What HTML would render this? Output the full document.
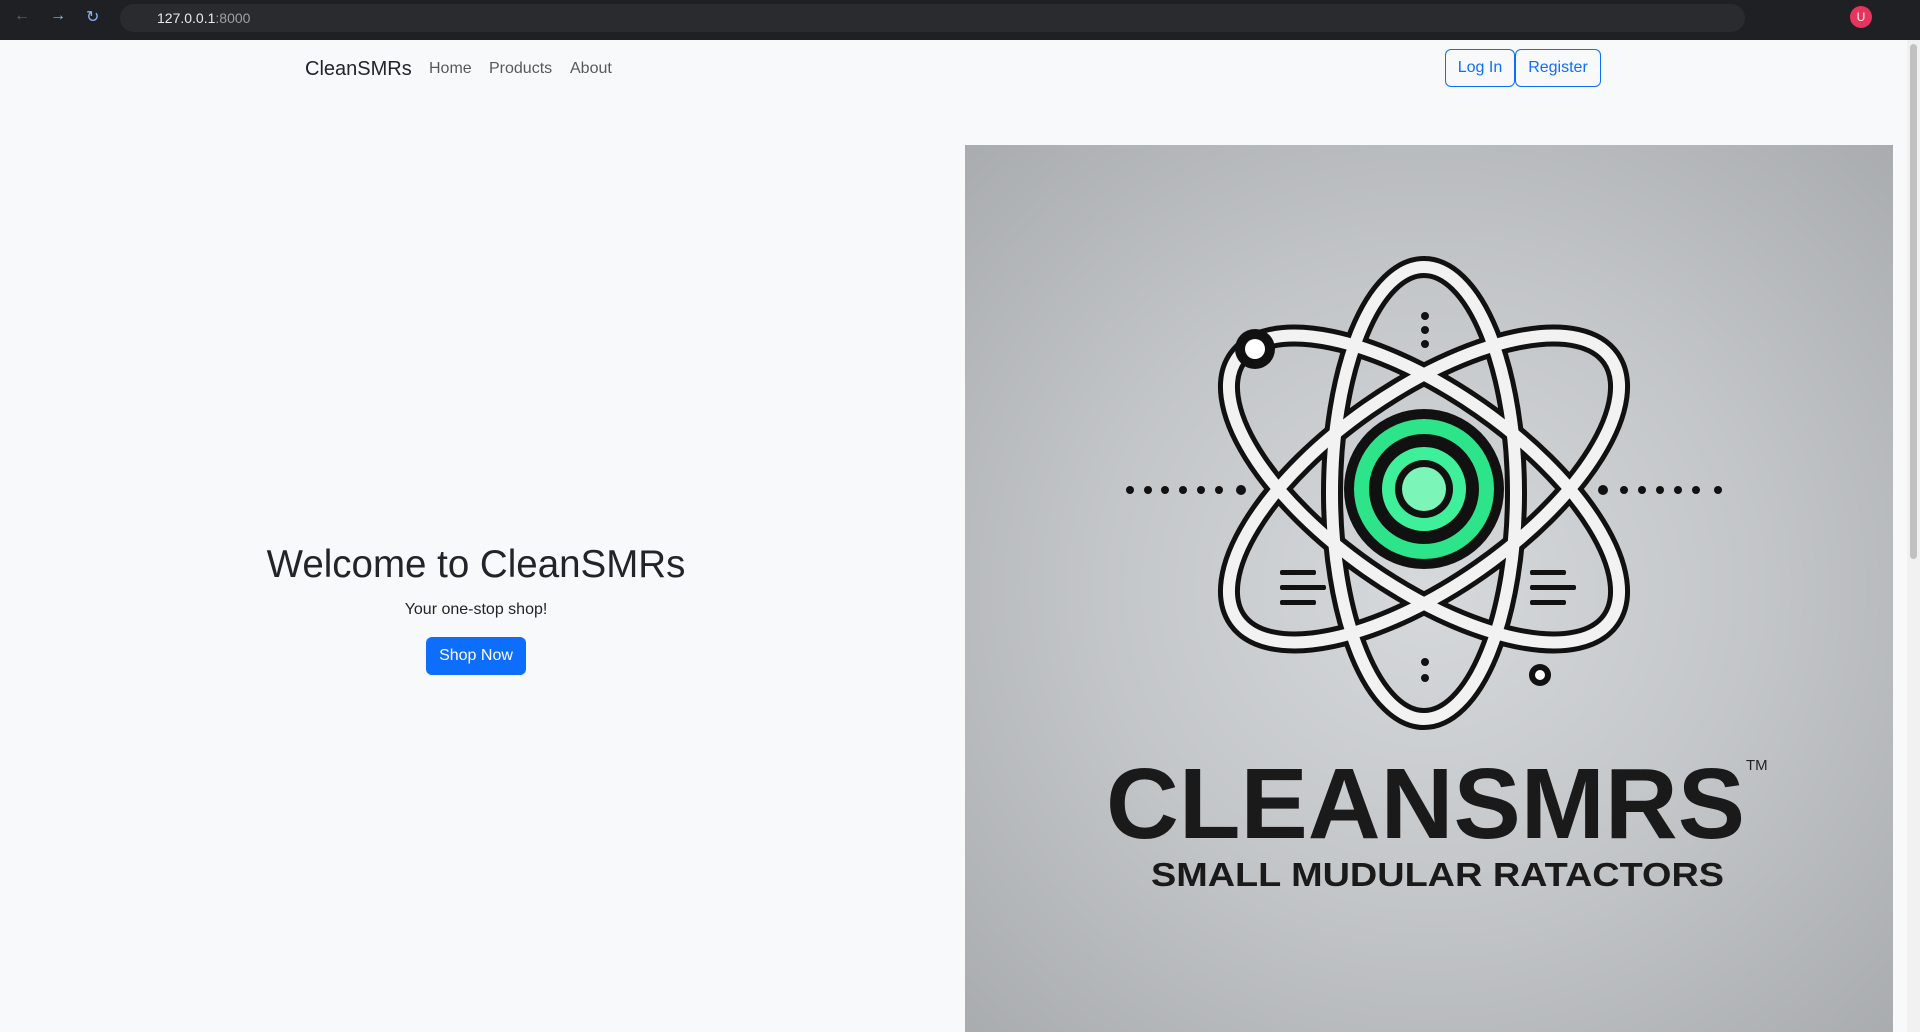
<!DOCTYPE html>
<html><head><meta charset="utf-8"><style>
*{margin:0;padding:0;box-sizing:border-box}
html,body{width:1920px;height:1032px;overflow:hidden;background:#f8f9fa;font-family:"Liberation Sans",sans-serif;position:relative}
.chrome{position:absolute;left:0;top:0;width:1920px;height:40px;background:#1f2023}
.url{position:absolute;left:120px;top:4px;width:1625px;height:28px;border-radius:14px;background:#2a2b2f;color:#e8eaed;font-size:14px;line-height:28px;padding-left:37px}
.url span{color:#9aa0a6}
.ab{position:absolute;color:#8ab4f8;font-size:16px;top:7px}
.brand{position:absolute;left:305px;top:58px;font-size:20px;color:#212529}
.lnk{position:absolute;top:60px;font-size:16px;color:rgba(0,0,0,.65)}
.btno{position:absolute;top:49px;height:38px;border:1px solid #0d6efd;color:#0d6efd;border-radius:6px;font-size:16px;line-height:36px;text-align:center}
h1{position:absolute;left:0;width:952px;text-align:center;top:543px;font-size:38.5px;font-weight:500;color:#212529}
.sub{position:absolute;left:0;width:952px;text-align:center;top:601px;font-size:16px;color:#212529}
.shop{position:absolute;left:426px;top:637px;width:100px;height:38px;background:#0d6efd;color:#fff;border-radius:6px;font-size:16px;line-height:38px;text-align:center}
.img{position:absolute;left:965px;top:145px;width:928px;height:887px;background:radial-gradient(ellipse at 50% 50%,#d6d9dc 0%,#c3c6c9 50%,#a9acaf 100%)}
.sb{position:absolute;left:1907px;top:40px;width:13px;height:992px;background:#f1f1f1}
.sb div{position:absolute;left:3px;top:4px;width:7px;height:515px;border-radius:4px;background:#c1c1c1}
</style></head><body>
<div class="chrome">
<div class="ab" style="left:14px;color:#5f6368">←</div>
<div class="ab" style="left:50px">→</div>
<div class="ab" style="left:86px">↻</div>
<div class="url">127.0.0.1<span>:8000</span></div>
<div style="position:absolute;left:1850px;top:6px;width:22px;height:22px;border-radius:50%;background:#e8345d;color:#fff;font-size:12px;text-align:center;line-height:22px">U</div>
</div>
<div class="brand">CleanSMRs</div>
<div class="lnk" style="left:429px">Home</div>
<div class="lnk" style="left:489px">Products</div>
<div class="lnk" style="left:570px">About</div>
<div class="btno" style="left:1445px;width:70px">Log In</div>
<div class="btno" style="left:1515px;width:86px">Register</div>
<h1>Welcome to CleanSMRs</h1>
<div class="sub">Your one-stop shop!</div>
<div class="shop">Shop Now</div>
<div class="img">
<svg width="928" height="887" viewBox="965 145 928 887" style="position:absolute;left:0;top:0">
<g fill="none">
<g stroke="#111" stroke-width="22">
<ellipse cx="1424" cy="493" rx="92" ry="226"/>
<ellipse cx="1424" cy="489" rx="228" ry="98" transform="rotate(35 1424 489)"/>
<ellipse cx="1424" cy="489" rx="228" ry="98" transform="rotate(-35 1424 489)"/>
</g>
<g stroke="#f2f2f2" stroke-width="12">
<ellipse cx="1424" cy="493" rx="92" ry="226"/>
<ellipse cx="1424" cy="489" rx="228" ry="98" transform="rotate(35 1424 489)"/>
<ellipse cx="1424" cy="489" rx="228" ry="98" transform="rotate(-35 1424 489)"/>
</g>
</g>
<circle cx="1424" cy="489" r="80" fill="#111"/>
<circle cx="1424" cy="489" r="70" fill="#2ee48a"/>
<circle cx="1424" cy="489" r="55" fill="#111"/>
<circle cx="1424" cy="489" r="42" fill="#3ff09a"/>
<circle cx="1424" cy="489" r="29" fill="#111"/>
<circle cx="1424" cy="489" r="22" fill="#7cf5b8"/>
<circle cx="1255" cy="349" r="20" fill="#111"/><circle cx="1255" cy="349" r="10" fill="#fff"/>
<circle cx="1540" cy="675" r="11" fill="#111"/><circle cx="1540" cy="675" r="5" fill="#fff"/>
<g fill="#111">
<circle cx="1130" cy="490" r="4"/><circle cx="1148" cy="490" r="4"/><circle cx="1165" cy="490" r="4"/><circle cx="1183" cy="490" r="4"/><circle cx="1201" cy="490" r="4"/><circle cx="1219" cy="490" r="4"/><circle cx="1241" cy="490" r="5"/>
<circle cx="1603" cy="490" r="5"/><circle cx="1624" cy="490" r="4"/><circle cx="1642" cy="490" r="4"/><circle cx="1660" cy="490" r="4"/><circle cx="1678" cy="490" r="4"/><circle cx="1696" cy="490" r="4"/><circle cx="1718" cy="490" r="4"/>
<rect x="1280" y="570" width="36" height="5" rx="2"/><rect x="1280" y="585" width="46" height="5" rx="2"/><rect x="1280" y="600" width="36" height="5" rx="2"/>
<rect x="1530" y="570" width="36" height="5" rx="2"/><rect x="1530" y="585" width="46" height="5" rx="2"/><rect x="1530" y="600" width="36" height="5" rx="2"/>
<circle cx="1425" cy="316" r="4"/><circle cx="1425" cy="330" r="4"/><circle cx="1425" cy="344" r="4"/>
<circle cx="1425" cy="662" r="4"/><circle cx="1425" cy="678" r="4"/>
</g>
<text x="1106" y="838" font-family="Liberation Sans" font-weight="bold" font-size="100" fill="#1a1a1a" textLength="639" lengthAdjust="spacingAndGlyphs">CLEANSMRS</text>
<text x="1746" y="770" font-family="Liberation Sans" font-size="15" fill="#222">TM</text>
<text x="1151" y="886" font-family="Liberation Sans" font-weight="bold" font-size="33" fill="#1a1a1a" textLength="573" lengthAdjust="spacingAndGlyphs">SMALL MUDULAR RATACTORS</text>
</svg>
</div>
<div class="sb"><div></div></div>
</body></html>
